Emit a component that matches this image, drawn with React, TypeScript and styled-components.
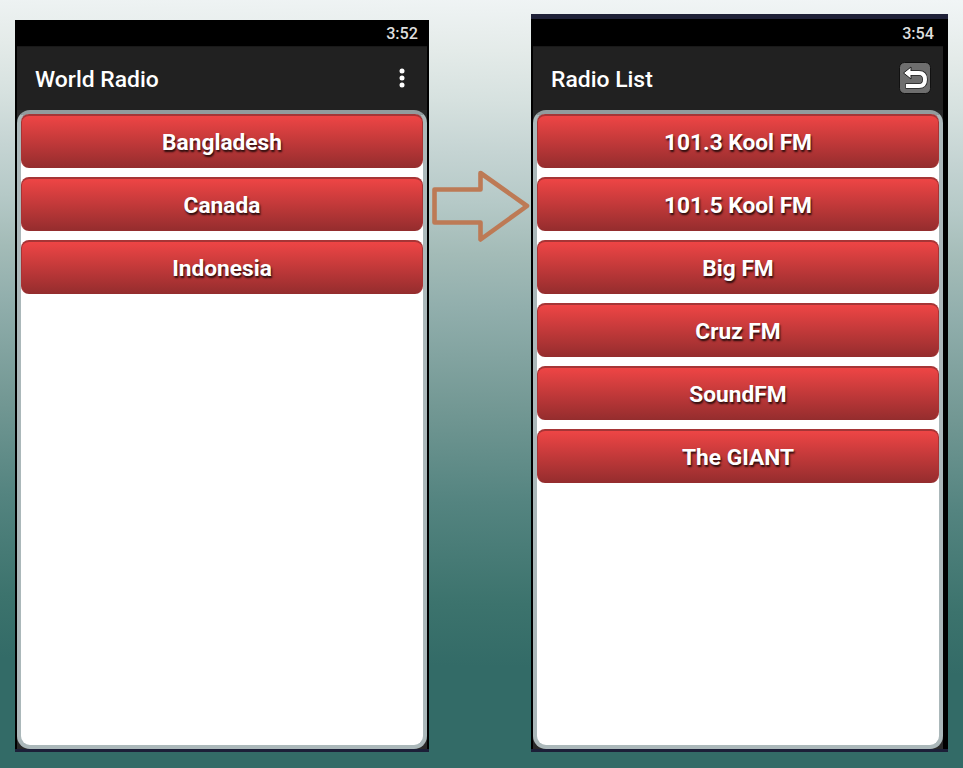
import React from 'react';
import styled, { createGlobalStyle } from 'styled-components';

const GlobalStyle = createGlobalStyle`
  * { box-sizing: border-box; }
  body { margin: 0; overflow: hidden; }
`;

const Stage = styled.main`
  width: 963px;
  height: 768px;
  display: flex;
  align-items: flex-end;
  padding: 0 15px 16px;
  font-family: Roboto, sans-serif;
  background: linear-gradient(
    181deg,
    #f1f5f6 0%,
    #e4ebe9 7.5%,
    #d6e1df 14%,
    #c5d4d3 20.500%,
    #b5c9c7 27%,
    #a3bbb7 33.500%,
    #92afad 40%,
    #739894 53%,
    #548480 65%,
    #3c736d 78%,
    #336b67 86%,
    #336b67 100%
  );
`;

const Phone = styled.section<{ $wide?: boolean }>`
  width: ${p => (p.$wide ? 417 : 414)}px;
  height: ${p => (p.$wide ? 738 : 732)}px;
  flex: none;
  display: flex;
  flex-direction: column;
  background: #000;
  border-top: ${p => (p.$wide ? 5 : 0)}px solid #1f2138;
  border-bottom: 3px solid #1c1f38;
`;

const StatusBar = styled.div<{ $wide?: boolean }>`
  height: ${p => (p.$wide ? 27 : 26)}px;
  flex: none;
  padding-right: ${p => (p.$wide ? 14 : 11)}px;
  text-align: right;
  font-size: 16.2px;
  font-weight: 500;
  line-height: ${p => (p.$wide ? 29 : 27)}px;
  color: #dedede;
`;

const Screen = styled.div<{ $wide?: boolean }>`
  flex: 1;
  display: flex;
  flex-direction: column;
  margin: 0 ${p => (p.$wide ? 5 : 2)}px 0 2px;
  background: #292929;
`;

const AppBar = styled.header`
  height: 64px;
  flex: none;
  display: flex;
  align-items: center;
  justify-content: space-between;
  padding: 0 11px 0 18px;
  background: #212121;
  border-top: 1px solid #191919;
`;

const Title = styled.h1`
  margin: 0;
  padding-top: 2px;
  font-size: 22.9px;
  font-weight: 500;
  line-height: 30px;
  color: #fff;
`;

const MenuDots = styled.svg`
  width: 28px;
  height: 28px;
  margin-bottom: 1px;
  fill: #fff;
`;

const BackIcon = styled.svg`
  width: 34px;
  height: 34px;
  margin-bottom: 2px;
`;

const List = styled.div`
  flex: 1;
  display: flex;
  flex-direction: column;
  gap: 9.1px;
  border: 4px solid #abb8ba;
  border-top-color: #929b9d;
  border-radius: 13px;
  background: #fff;
`;

const Item = styled.button`
  height: 54px;
  flex: none;
  padding: 2px 0 0;
  border: 1px solid #a93334;
  border-top: 2px solid #a63536;
  border-bottom-color: #942d2e;
  border-radius: 8px;
  background: linear-gradient(#ee4545, #962d2e);
  font: 700 22.7px/30px Roboto, sans-serif;
  color: #fff;
  text-shadow: 1px 1.5px 2px rgba(0, 0, 0, 0.8);
`;

const Between = styled.div`
  width: 102px;
  height: 732px;
  flex: none;
  padding: 149px 0 0 2px;
`;

const countries = ['Bangladesh', 'Canada', 'Indonesia'];
const stations = ['101.3 Kool FM', '101.5 Kool FM', 'Big FM', 'Cruz FM', 'SoundFM', 'The GIANT'];

type RadioPhoneProps = {
  time: string;
  title: string;
  items: string[];
  action: React.ReactNode;
  wide?: boolean;
};

function RadioPhone({ time, title, items, action, wide }: RadioPhoneProps) {
  return (
    <Phone $wide={wide}>
      <StatusBar $wide={wide}>{time}</StatusBar>
      <Screen $wide={wide}>
        <AppBar>
          <Title>{title}</Title>
          {action}
        </AppBar>
        <List>
          {items.map(name => <Item key={name}>{name}</Item>)}
        </List>
      </Screen>
    </Phone>
  );
}

export default function App() {
  return (
    <>
      <GlobalStyle />
      <Stage>
        <RadioPhone
          time="3:52"
          title="World Radio"
          items={countries}
          action={
            <MenuDots viewBox="0 0 28 28">
              <circle cx="14" cy="7" r="2.5" />
              <circle cx="14" cy="14" r="2.5" />
              <circle cx="14" cy="21" r="2.5" />
            </MenuDots>
          }
        />
        <Between>
          <svg width="100" height="74" viewBox="0 0 100 74" fill="none">
            <path d="M5.500 20.500H51.500V4L98 37L51.500 70.500V53.500H5.500Z" stroke="#bd7a55" strokeWidth="4.600" strokeLinejoin="round" transform="translate(-2 0)" />
          </svg>
        </Between>
        <RadioPhone
          wide
          time="3:54"
          title="Radio List"
          items={stations}
          action={
            <BackIcon viewBox="0 0 34 34">
              <rect x="1.5" y="1.5" width="31" height="31" rx="5" fill="#6e6e6e" stroke="#111" />
              <path d="M11 12H21Q27 12 27 18.500Q27 25 21 25H7.500" fill="none" stroke="#222" strokeWidth="5.500" />
              <path d="M5.500 12L13 6V18Z" fill="#fff" stroke="#222" />
              <path d="M11 12H21Q27 12 27 18.500Q27 25 21 25H8" fill="none" stroke="#fff" strokeWidth="4" />
            </BackIcon>
          }
        />
      </Stage>
    </>
  );
}
